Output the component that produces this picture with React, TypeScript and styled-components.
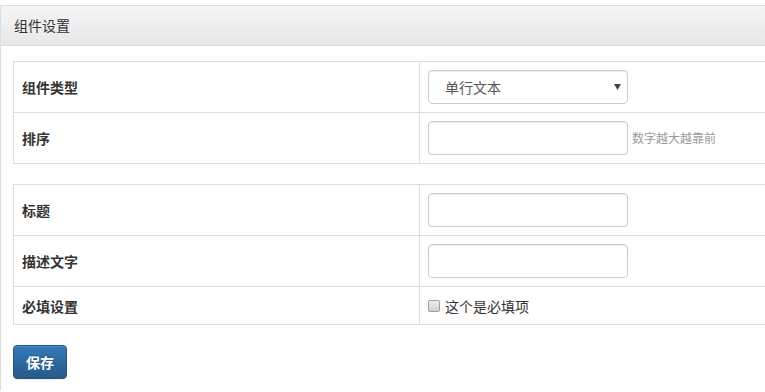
import React from "react";
import styled, { createGlobalStyle } from "styled-components";

const GlobalStyle = createGlobalStyle`
  html, body {
    margin: 0;
    padding: 0;
    overflow: hidden;
    background: #fff;
  }
  body {
    font-family: "Noto Sans CJK SC", "Noto Sans", sans-serif;
    font-size: 14px;
    color: #333;
  }
`;

const Panel = styled.div`
  margin-top: 5px;
  width: 790px;
  border: 1px solid #ddd;
  border-right: none;
  border-bottom: none;
  background: #fff;
`;

const PanelHeading = styled.div`
  height: 39px;
  line-height: 39px;
  padding: 0 13px;
  border-bottom: 1px solid #ddd;
  background-image: linear-gradient(to bottom, #f5f5f5 0, #e8e8e8 100%);
  font-size: 14px;
  color: #333;
`;

const PanelBody = styled.div`
  padding: 15px 12px 11px 12px;
`;

const FormTable = styled.table`
  width: 100%;
  border-collapse: collapse;
  border-spacing: 0;
  margin-bottom: 20px;
`;

const LabelCell = styled.th`
  width: 389px;
  padding: 8px;
  border: 1px solid #ddd;
  text-align: left;
  vertical-align: middle;
  font-weight: bold;
  font-size: 14px;
  line-height: 20px;
  color: #333;
`;

const FieldCell = styled.td<{ $compact?: boolean }>`
  padding: ${(p) => (p.$compact ? "9px 8px 8px" : "8px")};
  border: 1px solid #ddd;
  vertical-align: middle;
  line-height: 20px;
`;

const FieldRow = styled.div`
  display: flex;
  align-items: center;
  gap: 4px;
`;

const TextInput = styled.input`
  box-sizing: border-box;
  width: 200px;
  height: 34px;
  padding: 6px 12px;
  border: 1px solid #ccc;
  border-radius: 4px;
  box-shadow: inset 0 1px 1px rgba(0, 0, 0, 0.075);
  font-family: inherit;
  font-size: 14px;
  color: #555;
  background: #fff;
  outline: none;
`;

const SelectWrap = styled.div`
  position: relative;
  width: 200px;
`;

const Select = styled.select`
  box-sizing: border-box;
  width: 200px;
  height: 34px;
  padding: 0 12px 0 16px;
  border: 1px solid #ccc;
  border-radius: 4px;
  box-shadow: inset 0 1px 1px rgba(0, 0, 0, 0.075);
  appearance: none;
  -webkit-appearance: none;
  font-family: inherit;
  font-size: 14px;
  color: #555;
  background: #fff;
  outline: none;
`;

const SelectArrow = styled.svg`
  position: absolute;
  right: 7px;
  top: 14px;
  pointer-events: none;
`;

const HelpText = styled.span`
  font-size: 12px;
  color: #999;
`;

const CheckLabel = styled.label`
  display: flex;
  align-items: center;
  gap: 5px;
  font-size: 14px;
  color: #333;
  cursor: pointer;
`;

const CheckBox = styled.input`
  appearance: none;
  -webkit-appearance: none;
  box-sizing: border-box;
  width: 12px;
  height: 12px;
  margin: 0;
  border: 1px solid #a0a0a0;
  border-radius: 2px;
  background-image: linear-gradient(to bottom, #ececec 0, #d2d2d2 100%);
`;

const SaveButton = styled.button`
  box-sizing: border-box;
  height: 34px;
  padding: 0 12px;
  border: 1px solid #245580;
  border-radius: 4px;
  background-image: linear-gradient(to bottom, #337ab7 0, #265a88 100%);
  box-shadow: inset 0 1px 0 rgba(255, 255, 255, 0.15), 0 1px 1px rgba(0, 0, 0, 0.075);
  text-shadow: 0 -1px 0 rgba(0, 0, 0, 0.2);
  font-family: inherit;
  font-size: 14px;
  font-weight: 600;
  color: #fff;
  cursor: pointer;
`;

export default function App() {
  return (
    <>
      <GlobalStyle />
      <Panel>
        <PanelHeading>组件设置</PanelHeading>
        <PanelBody>
          <FormTable>
            <tbody>
              <tr>
                <LabelCell>组件类型</LabelCell>
                <FieldCell>
                  <SelectWrap>
                    <Select defaultValue="text">
                      <option value="text">单行文本</option>
                      <option value="textarea">多行文本</option>
                    </Select>
                    <SelectArrow width="7" height="6" viewBox="0 0 7 6">
                      <path d="M0 0 H7 L3.5 6 Z" fill="#444" />
                    </SelectArrow>
                  </SelectWrap>
                </FieldCell>
              </tr>
              <tr>
                <LabelCell>排序</LabelCell>
                <FieldCell>
                  <FieldRow>
                    <TextInput type="text" />
                    <HelpText>数字越大越靠前</HelpText>
                  </FieldRow>
                </FieldCell>
              </tr>
            </tbody>
          </FormTable>
          <FormTable>
            <tbody>
              <tr>
                <LabelCell>标题</LabelCell>
                <FieldCell>
                  <TextInput type="text" />
                </FieldCell>
              </tr>
              <tr>
                <LabelCell>描述文字</LabelCell>
                <FieldCell>
                  <TextInput type="text" />
                </FieldCell>
              </tr>
              <tr>
                <LabelCell>必填设置</LabelCell>
                <FieldCell $compact>
                  <CheckLabel>
                    <CheckBox type="checkbox" />
                    这个是必填项
                  </CheckLabel>
                </FieldCell>
              </tr>
            </tbody>
          </FormTable>
          <SaveButton>保存</SaveButton>
        </PanelBody>
      </Panel>
    </>
  );
}
